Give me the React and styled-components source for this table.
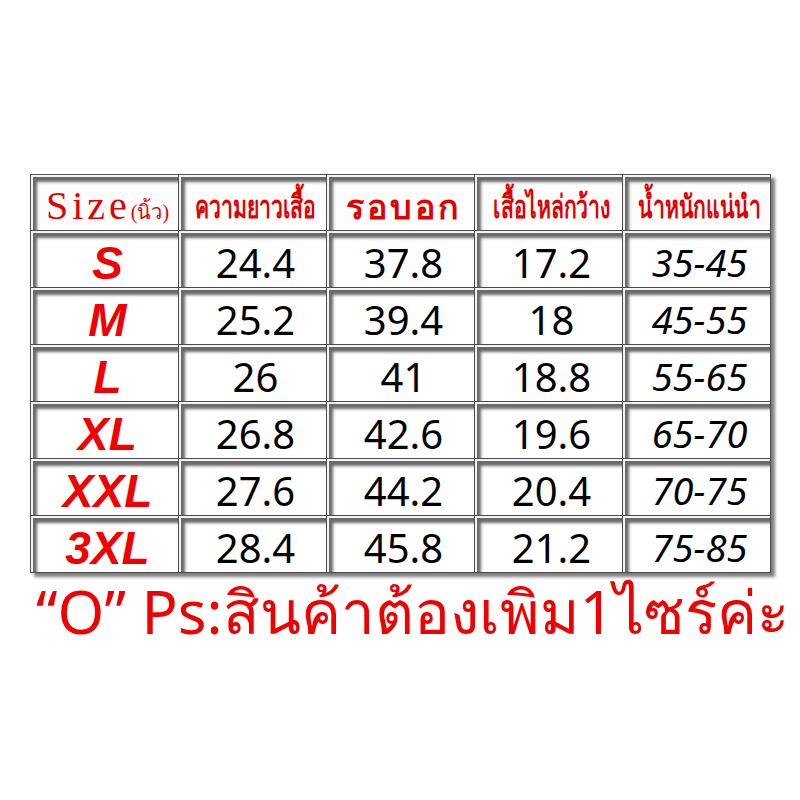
import styled, { createGlobalStyle } from "styled-components";

const GlobalStyle = createGlobalStyle`
  html, body {
    margin: 0;
    padding: 0;
    background: #ffffff;
  }
  body {
    font-family: "Noto Sans", "Liberation Sans", sans-serif;
  }
`;

const rows = [
  { size: "S", length: "24.4", chest: "37.8", shoulder: "17.2", weight: "35-45" },
  { size: "M", length: "25.2", chest: "39.4", shoulder: "18", weight: "45-55" },
  { size: "L", length: "26", chest: "41", shoulder: "18.8", weight: "55-65" },
  { size: "XL", length: "26.8", chest: "42.6", shoulder: "19.6", weight: "65-70" },
  { size: "XXL", length: "27.6", chest: "44.2", shoulder: "20.4", weight: "70-75" },
  { size: "3XL", length: "28.4", chest: "45.8", shoulder: "21.2", weight: "75-85" },
];

export default function App() {
  return (
    <Page>
      <GlobalStyle />
      <Table>
        <Cell $header>
          <SizeTitle>
            Size<SizeUnit>(นิ้ว)</SizeUnit>
          </SizeTitle>
        </Cell>
        <Cell $header>
          <HeadText>ความยาวเสื้อ</HeadText>
        </Cell>
        <Cell $header>
          <HeadText $big>รอบอก</HeadText>
        </Cell>
        <Cell $header>
          <HeadText>เสื้อไหล่กว้าง</HeadText>
        </Cell>
        <Cell $header>
          <HeadText>น้ำหนักแน่นำ</HeadText>
        </Cell>

        {rows.map((r) => (
          <Row key={r.size}>
            <Cell>
              <SizeLabel>{r.size}</SizeLabel>
            </Cell>
            <Cell>
              <Value>{r.length}</Value>
            </Cell>
            <Cell>
              <Value>{r.chest}</Value>
            </Cell>
            <Cell>
              <Value>{r.shoulder}</Value>
            </Cell>
            <Cell>
              <Weight>{r.weight}</Weight>
            </Cell>
          </Row>
        ))}
      </Table>
      <Note>“O” Ps:สินค้าต้องเพิม1ไซร์ค่ะ</Note>
    </Page>
  );
}

const Page = styled.div`
  width: 800px;
  height: 800px;
  padding: 174px 0 0 30px;
  box-sizing: border-box;
  overflow: hidden;
`;

const Table = styled.div`
  display: grid;
  grid-template-columns: repeat(5, 148px);
  grid-template-rows: 56px repeat(6, 57px);
  width: 740px;
  border-top: 1px solid #555;
  border-left: 1px solid #555;
  box-shadow: 4px 4px 3px rgba(0, 0, 0, 0.5);
`;

const Row = styled.div`
  display: contents;
`;

const Cell = styled.div`
  display: flex;
  align-items: center;
  justify-content: center;
  background: ${(p) => (p.$header ? "#fdfdfd" : "#ffffff")};
  border-right: 1px solid #4a4a4a;
  border-bottom: 1px solid #4a4a4a;
  box-shadow: inset 2px 2px 0 #f4f4f4, inset 7px 8px 3px -1px rgba(80, 80, 80, 0.85);
  box-sizing: border-box;
  padding: 7px 0 0 6px;
`;

const SizeTitle = styled.div`
  font-family: "Liberation Serif", serif;
  color: #e30000;
  font-size: 40px;
  letter-spacing: 4px;
  line-height: 1.2;
  white-space: nowrap;
`;

const SizeUnit = styled.span`
  font-size: 20px;
  letter-spacing: 0;
`;

const HeadText = styled.div`
  color: #e00000;
  font-size: ${(p) => (p.$big ? "34px" : "32px")};
  font-weight: 700;
  letter-spacing: ${(p) => (p.$big ? "3px" : "0")};
  white-space: nowrap;
  line-height: 1.2;
  transform: ${(p) => (p.$big ? "none" : "scaleX(0.66)")};
`;

const SizeLabel = styled.div`
  color: #f00000;
  font-family: "Liberation Sans", sans-serif;
  font-style: italic;
  font-weight: 700;
  font-size: 46px;
  line-height: 1;
`;

const Value = styled.div`
  color: #000;
  font-family: "Noto Sans", sans-serif;
  font-size: 40px;
  line-height: 1.2;
`;

const Weight = styled.div`
  color: #000;
  font-family: "Noto Sans", sans-serif;
  font-style: italic;
  font-weight: 400;
  font-size: 38px;
  line-height: 1.2;
`;

const Note = styled.div`
  margin-top: 2px;
  margin-left: 6px;
  color: #f00000;
  font-family: "Noto Sans", sans-serif;
  font-size: 60px;
  line-height: 1.2;
  white-space: nowrap;
`;
